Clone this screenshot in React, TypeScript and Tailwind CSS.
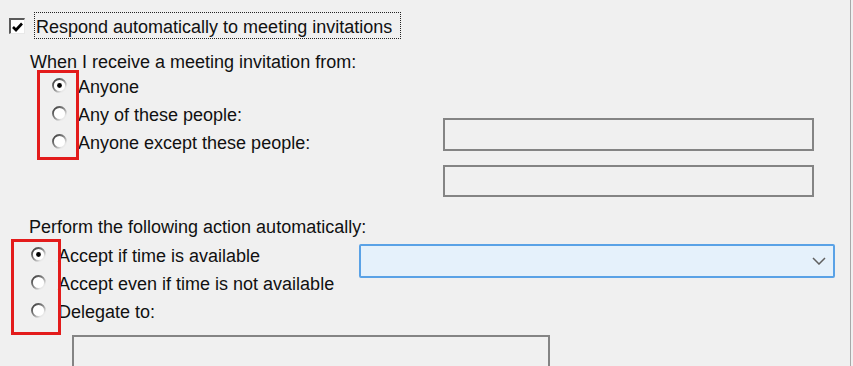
import React from "react";

function Radio({ checked }: { checked?: boolean }) {
  return (
    <svg width="15" height="15" viewBox="0 0 15 15" className="shrink-0">
      <defs>
        <linearGradient id="rg" x1="0" y1="0" x2="1" y2="1">
          <stop offset="0" stopColor="#333333" />
          <stop offset="0.5" stopColor="#8c8c8c" />
          <stop offset="0.8" stopColor="#e6e6e6" />
          <stop offset="1" stopColor="#f4f4f4" />
        </linearGradient>
      </defs>
      <circle cx="7.5" cy="7.5" r="6.5" fill="#ffffff" stroke="url(#rg)" strokeWidth="1.8" />
      {checked && <circle cx="7.5" cy="7.5" r="2.4" fill="#000" />}
    </svg>
  );
}

function Checkbox() {
  return (
    <div className="w-[16px] h-[16px] shrink-0 border-t-2 border-l-2 border-[#5a5a5a] border-r border-b border-r-[#e8e8e8] border-b-[#e8e8e8] bg-white flex items-center justify-center">
      <svg width="11" height="10" viewBox="0 0 11 10">
        <path d="M1 5 L4 8 L10 1.5" fill="none" stroke="#000" strokeWidth="2.6" />
      </svg>
    </div>
  );
}

function RadioRow({ label, checked, gap }: { label: string; checked?: boolean; gap: string }) {
  return (
    <div className={`h-[28px] flex items-center ${gap}`}>
      <Radio checked={checked} />
      <span className="pt-[3px]">{label}</span>
    </div>
  );
}

export default function App() {
  return (
    <div
      className="relative w-[853px] h-[366px] overflow-hidden bg-[#f0f0f0] text-[18px] leading-[20px] text-[#111]"
      style={{ fontFamily: '"Liberation Sans", Arial, sans-serif' }}
    >
      <div className="w-[851px] h-full border-r border-[#a8a8a8] flex flex-col">
        {/* header checkbox */}
        <div className="mt-[12px] h-[26px] flex items-center">
          <div className="ml-[9px] mt-[2px]">
            <Checkbox />
          </div>
          <div className="ml-[9px] h-[27px] w-[367px] border border-dotted border-[#222] flex items-center pl-[1px] pt-[4px]">
            Respond automatically to meeting invitations
          </div>
        </div>

        {/* who */}
        <div className="mt-[15px] ml-[30px] leading-[18px]">When I receive a meeting invitation from:</div>
        <div className="flex">
          <div className="ml-[52px] flex flex-col">
            <RadioRow label="Anyone" checked gap="gap-[11px]" />
            <RadioRow label="Any of these people:" gap="gap-[11px]" />
            <RadioRow label="Anyone except these people:" gap="gap-[11px]" />
          </div>
          <div className="ml-auto mr-[36px] mt-[47px] flex flex-col gap-[14px]">
            <div className="w-[371px] h-[33px] border-2 border-[#848484]" />
            <div className="w-[371px] h-[32px] border-2 border-[#848484]" />
          </div>
        </div>

        {/* action */}
        <div className="mt-[21px] ml-[29px] leading-[18px]">Perform the following action automatically:</div>
        <div className="mt-[4px] flex">
          <div className="ml-[31px] flex flex-col">
            <RadioRow label="Accept if time is available" checked gap="gap-[12px]" />
            <RadioRow label="Accept even if time is not available" gap="gap-[12px]" />
            <RadioRow label="Delegate to:" gap="gap-[12px]" />
          </div>
          <div className="ml-auto mr-[15px] mt-[4px] w-[476px] h-[34px] border-2 border-[#5aa2e6] rounded-[2px] bg-[#e5f1fb] flex items-center justify-end pr-[7px]">
            <svg width="14" height="8" viewBox="0 0 14 8">
              <path d="M1 1 L7 7 L13 1" fill="none" stroke="#606060" strokeWidth="1.5" />
            </svg>
          </div>
        </div>
        <div className="mt-[11px] ml-[72px] w-[478px] h-[33px] shrink-0 border-2 border-[#848484]" />
      </div>

      {/* red highlight boxes */}
      <div className="absolute left-[37px] top-[70px] w-[42px] h-[90px] border-[3px] border-[#e31b1b]" />
      <div className="absolute left-[11px] top-[239px] w-[50px] h-[96px] border-[3px] border-[#e31b1b]" />
    </div>
  );
}
